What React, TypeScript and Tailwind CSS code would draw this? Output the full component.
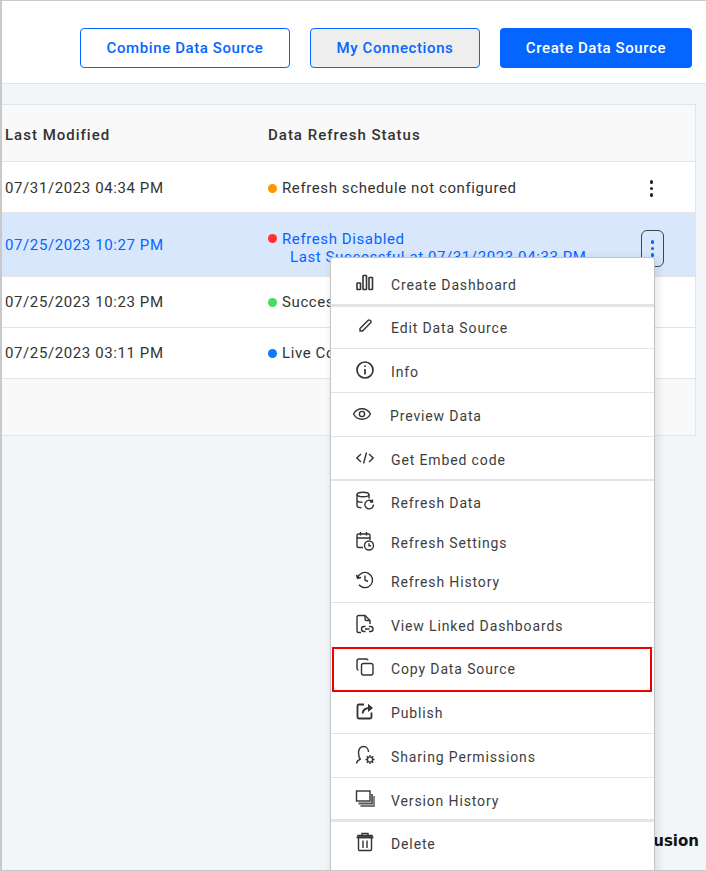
import type { ReactNode } from "react";

const ic = "w-5 h-5 fill-none stroke-[#333] stroke-[1.4]";

const icons: Record<string, ReactNode> = {
  chart: (
    <svg viewBox="0 0 20 20" className="w-5 h-5 fill-none stroke-[#333] stroke-[1.6]">
      <rect x="2" y="10" width="3.5" height="6.5" rx="0.6" />
      <rect x="8" y="2.500" width="3.500" height="14" rx="0.6" />
      <rect x="14" y="4.500" width="3.500" height="12" rx="0.6" />
    </svg>
  ),
  pencil: (
    <svg viewBox="0 0 20 20" className={ic}>
      <path d="M5 12.500 13.200 4.300a1.200 1.200 0 0 1 1.700 0l.8.8a1.200 1.200 0 0 1 0 1.700L7.500 15H5z" />
    </svg>
  ),
  info: (
    <svg viewBox="0 0 20 20" className="w-5 h-5 fill-none stroke-[#333] stroke-[1.7]">
      <circle cx="10" cy="10" r="8" />
      <path d="M10 9v5.5M10 5.4v1.6" />
    </svg>
  ),
  eye: (
    <svg viewBox="0 0 20 20" className={ic}>
      <path d="M1.5 10C3.5 6.5 6.5 4.8 10 4.8s6.5 1.7 8.5 5.2c-2 3.5-5 5.2-8.5 5.2S3.500 13.500 1.500 10z" />
      <circle cx="10" cy="10" r="2.600" />
    </svg>
  ),
  code: (
    <svg viewBox="0 0 20 20" className={ic}>
      <path d="M6 6 1.800 10 6 14M14 6l4.200 4-4.200 4M11.500 4.500l-3 11" />
    </svg>
  ),
  refreshData: (
    <svg viewBox="0 0 20 20" className={ic}>
      <ellipse cx="8" cy="3.500" rx="6" ry="2.300" />
      <path d="M2 3.500v11c0 1.300 2 2.200 4.500 2.300M14 3.500v4M2 9c0 1.300 2.500 2.300 5.500 2.300" />
      <path d="M18.500 13.500a4.300 4.300 0 1 1-1.300-3M17.500 8.500v2.500H15" />
    </svg>
  ),
  schedule: (
    <svg viewBox="0 0 20 20" className={ic}>
      <path d="M8 16.500H3.500a1.500 1.500 0 0 1-1.500-1.500V4.500A1.500 1.500 0 0 1 3.500 3h10A1.500 1.500 0 0 1 15 4.500V9M2 7h13M5.500 1v3.500M11.500 1v3.500" />
      <circle cx="14" cy="14.500" r="4.500" />
      <path d="M14 12.200v2.500h2" />
    </svg>
  ),
  history: (
    <svg viewBox="0 0 20 20" className={ic}>
      <path d="M2.600 8A7.600 7.600 0 1 1 4 14.800M1.500 4.800 2.500 8.300 6 7.500M10 5.500V10l3 1.500" />
    </svg>
  ),
  linked: (
    <svg viewBox="0 0 20 20" className={ic}>
      <path d="M6 18.500H3.500A1.500 1.500 0 0 1 2 17V3A1.500 1.500 0 0 1 3.500 1.500H10l5 5V10" />
      <path d="M10 1.500v3.500A1.500 1.500 0 0 0 11.500 6.500H15" />
      <path d="M10.500 12.500H9a2.500 2.500 0 0 0 0 5h1.500M14 12.500h1.500a2.500 2.500 0 0 1 0 5H14M10 15h4.500" />
    </svg>
  ),
  copy: (
    <svg viewBox="0 0 20 20" className={ic}>
      <path d="M3.500 13A1.800 1.800 0 0 1 2 11.200V4a2 2 0 0 1 2-2h7.200A1.800 1.800 0 0 1 13 3.500" />
      <rect x="6.500" y="6.500" width="11.500" height="11.500" rx="2" />
    </svg>
  ),
  publish: (
    <svg viewBox="0 0 20 20" className="w-5 h-5 fill-none stroke-[#333] stroke-[1.8]">
      <path d="M9 3.500H4A1.500 1.500 0 0 0 2.500 5v11A1.500 1.500 0 0 0 4 17.500h11a1.500 1.500 0 0 0 1.500-1.500v-4.500" />
      <path d="M7.500 12.500c.5-3.500 3-5.500 7-5.500" />
      <path d="M13 2.800 18 7l-5 4z" fill="#333" stroke="none" />
    </svg>
  ),
  sharing: (
    <svg viewBox="0 0 20 20" className={ic}>
      <path d="M1.500 18.500c.3-2.500 2-3.500 3.800-4.300C4 12.500 3.500 10.500 3.500 7.500c0-3.500 2-6 5-6s5 2.500 5 5.500" />
      <circle cx="15" cy="14.500" r="2.600" />
      <path d="M15 10v1.500M15 17.500V19M10.500 14.500H12M18 14.500h1.500M11.800 11.300l1.100 1.100M17.100 16.600l1.100 1.100M18.200 11.300l-1.100 1.100M12.900 16.600l-1.100 1.100" />
    </svg>
  ),
  version: (
    <svg viewBox="0 0 20 20" className={ic}>
      <rect x="1.500" y="2" width="13.500" height="10" fill="#fff" />
      <path d="M3.500 14.500H17V5" strokeWidth="1.800" stroke="#555" />
      <path d="M5.500 17H19V7" strokeWidth="1.800" stroke="#777" />
    </svg>
  ),
  trash: (
    <svg viewBox="0 0 20 20" className={ic}>
      <path d="M3.500 6v11.500a1 1 0 0 0 1 1h11a1 1 0 0 0 1-1V6M1.500 5.500h17M7 3V1.500h6V3" />
      <path d="M3 3.500h14v2H3z" fill="#666" stroke="#333" />
      <path d="M8 8.500v7.500M12 8.500v7.500" />
    </svg>
  ),
};

const menuItems = [
  { label: "Create Dashboard", icon: "chart", row: "h-[49px] border-b-[3px] border-[#e4e4e4] pt-[8px]" },
  { label: "Edit Data Source", icon: "pencil", row: "h-[42px] border-b border-[#e4e4e4] pt-[1px]" },
  { label: "Info", icon: "info", row: "h-[44px] border-b border-[#e4e4e4] pt-[4px]" },
  { label: "Preview Data", icon: "eye", row: "h-[44px] border-b border-[#e4e4e4] pt-[4px]", shift: true },
  { label: "Get Embed code", icon: "code", row: "h-[44px] border-b-[2px] border-[#e4e4e4] pt-[4px]" },
  { label: "Refresh Data", icon: "refreshData", row: "h-[43px] pt-[2px]" },
  { label: "Refresh Settings", icon: "schedule", row: "h-[39px]" },
  { label: "Refresh History", icon: "history", row: "h-[40px] border-b border-[#e4e4e4] pb-[1px]" },
  { label: "View Linked Dashboards", icon: "linked", row: "h-[45px] border-b border-[#e4e4e4] pt-[3px]" },
  { label: "Copy Data Source", icon: "copy", row: "h-[43px]", marked: true },
  { label: "Publish", icon: "publish", row: "h-[43px] border-b border-[#e4e4e4] pt-[3px]" },
  { label: "Sharing Permissions", icon: "sharing", row: "h-[44px] border-b border-[#e4e4e4] pt-[4px]" },
  { label: "Version History", icon: "version", row: "h-[44px] border-b-[3px] border-[#e4e4e4] pt-[6px]" },
  { label: "Delete", icon: "trash", row: "h-[45px]" },
];

function Kebab({ color }: { color: string }) {
  return (
    <div className="flex flex-col items-center gap-[3px]">
      <span className={`w-[3.5px] h-[3.5px] rounded-full ${color}`} />
      <span className={`w-[3.5px] h-[3.5px] rounded-full ${color}`} />
      <span className={`w-[3.5px] h-[3.5px] rounded-full ${color}`} />
    </div>
  );
}

function Row({
  date,
  dot,
  status,
  cls,
}: {
  date: string;
  dot: string;
  status: ReactNode;
  cls?: string;
}) {
  return (
    <div className={`flex items-center border-b border-[#e4e4e4] bg-white text-[#333] ${cls ?? ""}`}>
      <div className="w-[266px] pl-[3px] shrink-0">{date}</div>
      <div className="flex items-center gap-[5px] flex-1 whitespace-nowrap">
        <span className="flex w-[9px] h-[9px]">
          <span className={`w-[9px] h-[9px] rounded-full ${dot}`} />
        </span>
        {status}
      </div>
    </div>
  );
}

export default function App() {
  return (
    <div className="relative h-[871px] overflow-hidden border-t border-l-2 border-b border-[#c9c9c9] bg-[#f3f6f9] font-['Roboto',sans-serif] text-[15px] tracking-[0.6px]">
      {/* Top bar */}
      <div className="flex justify-end items-start gap-[20px] h-[83px] pt-[27px] pr-[14px] bg-white border-b border-[#e4e4e4] font-medium">
        <button className="w-[210px] h-[40px] pt-[1px] rounded-[4px] border border-[#0565ff] bg-white text-[#0565ff]">
          Combine Data Source
        </button>
        <button className="w-[170px] h-[40px] pt-[1px] rounded-[4px] border border-[#0565ff] bg-[#eeeeee] text-[#0565ff]">
          My Connections
        </button>
        <button className="w-[192px] h-[40px] pt-[1px] rounded-[4px] bg-[#0565ff] text-white">Create Data Source</button>
      </div>

      {/* Table */}
      <div className="mt-[20px] mr-[10px] border-t border-r border-b border-[#e4e4e4]">
        <div className="flex items-center h-[57px] pt-[5px] bg-[#f9f9f9] border-b border-[#e4e4e4] font-medium tracking-[1px] text-[#333]">
          <div className="w-[266px] pl-[3px] shrink-0">Last Modified</div>
          <div>Data Refresh Status</div>
        </div>
        <div className="relative">
          <Row date="07/31/2023 04:34 PM" dot="bg-[#ff9500]" status="Refresh schedule not configured" cls="h-[51px] pt-[2px]" />
          <div className="absolute right-[42px] top-[18px]">
            <Kebab color="bg-[#222]" />
          </div>
        </div>
        <div className="relative flex items-center h-[63px] bg-[#d9e7fd] text-[#0565ff]">
          <div className="w-[266px] pl-[3px] pt-[2px] shrink-0">07/25/2023 10:27 PM</div>
          <div className="whitespace-nowrap leading-[18px] pt-[6px]">
            <div className="flex items-center gap-[5px]">
              <span className="w-[9px] h-[9px] rounded-full bg-[#ff3030]" />
              Refresh Disabled
            </div>
            <div className="pl-[22px]">Last Successful at 07/31/2023 04:33 PM</div>
          </div>
          <div className="absolute right-[31px] top-[17px] flex items-center justify-center w-[23px] h-[37px] rounded-[6px] border border-[#444]">
            <Kebab color="bg-[#0565ff]" />
          </div>
        </div>
        <Row date="07/25/2023 10:23 PM" dot="bg-[#4cd964]" status="Success" cls="border-t border-t-[#e4e4e4] h-[52px] pt-[1px]" />
        <Row date="07/25/2023 03:11 PM" dot="bg-[#0a7aff]" status="Live Connection" cls="h-[51px]" />
        <div className="h-[56px] bg-[#f9f9f9]" />
      </div>

      {/* Footer logo, partly behind the menu */}
      <div className="absolute right-[7px] bottom-[18px] font-['DejaVu_Sans',sans-serif] font-bold text-[15px] tracking-normal text-[#111]">
        Syncfusion
      </div>

      {/* Context menu */}
      <div className="absolute left-[328px] top-[256px] w-[325px] h-[620px] bg-white border border-[#c4c4c4] rounded-[3px] text-[#3d3d3d] text-[14px] tracking-[0.87px] shadow-[2px_2px_10px_rgba(0,0,0,0.12)]">
        {menuItems.map((m) => (
          <div key={m.label} className={`relative flex items-center pl-[24px] ${m.row}`}>
            <span className={m.shift ? "-mt-[5px] -ml-[3px]" : "-mt-[5px]"}>{icons[m.icon]}</span>
            <span className={m.shift ? "ml-[18px]" : "ml-[16px]"}>{m.label}</span>
            {m.marked && (
              <div className="absolute left-[1px] right-[2px] -top-[1px] -bottom-[1px] border-2 border-[#ef0000]" />
            )}
          </div>
        ))}
      </div>
    </div>
  );
}
